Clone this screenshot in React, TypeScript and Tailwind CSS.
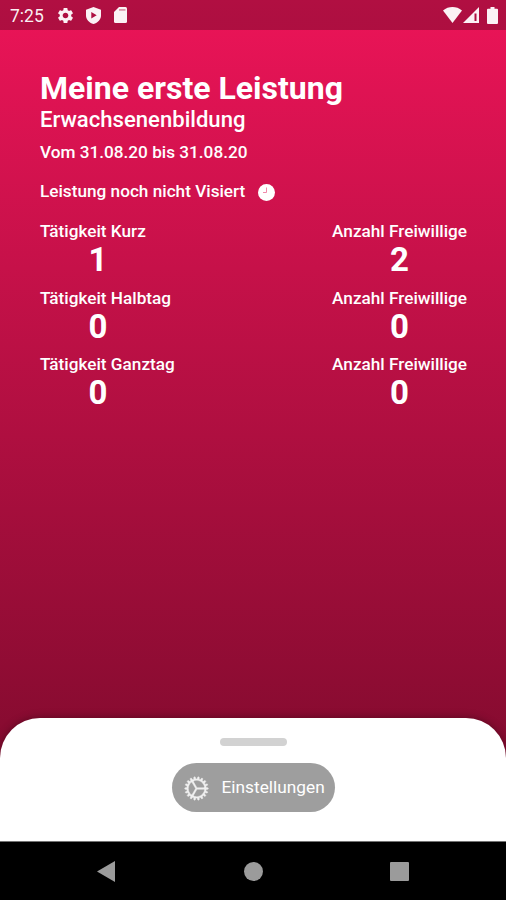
import { IoIosCog } from "react-icons/io";
import { MdSettings } from "react-icons/md";

interface Activity {
    label: string;
    count: number;
    volunteers: number;
}

const activities: Activity[] = [
    { label: "Tätigkeit Kurz", count: 1, volunteers: 2 },
    { label: "Tätigkeit Halbtag", count: 0, volunteers: 0 },
    { label: "Tätigkeit Ganztag", count: 0, volunteers: 0 },
];

function StatusBar() {
    return (
        <div className="h-[30px] shrink-0 flex items-center justify-between bg-black/25 pl-[10px] pr-[8px] text-white/95">
            <div className="flex items-center">
                <span className="w-[46px] text-[17.5px] leading-[30px] pt-[2px]">7:25</span>
                <MdSettings className="w-[19px] h-[19px]" />
                <svg className="w-[15px] h-[17px] ml-[11px]" viewBox="0 0 15 17">
                    <path
                        d="M7.5 0 15 2.7v5.8c0 4-3 7.2-7.5 8.5C3 15.7 0 12.5 0 8.5V2.7Z M5.3 5v6.6l5.4-3.3Z"
                        fill="currentColor"
                        fillRule="evenodd"
                    />
                </svg>
                <svg className="w-[13px] h-[16px] ml-[13px]" viewBox="0 0 13 16">
                    <path
                        d="M5 0h6.5A1.5 1.5 0 0 1 13 1.5v13a1.5 1.5 0 0 1-1.5 1.500h-10A1.5 1.5 0 0 1 0 14.5V5Z"
                        fill="currentColor"
                    />
                    <path d="M5 2h6.5v1.8H5Z" fill="#b01041" opacity="0.4" />
                </svg>
            </div>
            <div className="flex items-center">
                <svg className="w-[19px] h-[16px]" viewBox="0 0 19 16">
                    <path d="M0 3.5C5.5-1.1 13.5-1.1 19 3.5L9.5 16Z" fill="currentColor" />
                </svg>
                <svg className="w-[16px] h-[16px] ml-[1px]" viewBox="0 0 16 16">
                    <path d="M0 16 16 0v16Z M11.5 6.5v7.500h2v-7.500Z" fill="currentColor" fillRule="evenodd" />
                </svg>
                <svg className="w-[11px] h-[17px] ml-[8px]" viewBox="0 0 11 17">
                    <path
                        d="M3.5 0h4v1.7H10a1 1 0 0 1 1 1V16a1 1 0 0 1-1 1H1a1 1 0 0 1-1-1V2.7a1 1 0 0 1 1-1h2.5Z"
                        fill="currentColor"
                    />
                </svg>
            </div>
        </div>
    );
}

function ActivityRow({ label, count, volunteers }: Activity) {
    return (
        <div className="h-[66.5px] flex justify-between">
            <div>
                <p className="text-[17.2px] leading-5 font-medium">{label}</p>
                <p className="w-[116px] text-center text-[33px] leading-[37px] font-bold">{count}</p>
            </div>
            <div className="text-center">
                <p className="text-[17.2px] leading-5 font-medium">Anzahl Freiwillige</p>
                <p className="text-[33px] leading-[37px] font-bold">{volunteers}</p>
            </div>
        </div>
    );
}

function NavigationBar() {
    return (
        <div className="h-[59px] shrink-0 flex items-center justify-between bg-black border-t border-neutral-500 pl-[97px] pr-[97px] text-[#9b9b9b]">
            <svg className="w-[18px] h-[21px]" viewBox="0 0 18 21">
                <path d="M18 0v21L0 10.5Z" fill="currentColor" />
            </svg>
            <div className="w-[19px] h-[19px] ml-px rounded-full bg-[#9b9b9b]" />
            <div className="w-[19px] h-[19px] rounded-[1px] bg-[#9b9b9b]" />
        </div>
    );
}

export default function App() {
    return (
        <div className="w-[506px] h-[900px] flex flex-col overflow-hidden bg-linear-to-b from-[#ec1458] to-[#720928] font-[Roboto,sans-serif] text-white">
            <StatusBar />

            <main className="flex-1 pl-[40px] pr-[39px] pt-[39px]">
                <h1 className="text-[32px] leading-[38px] font-bold">Meine erste Leistung</h1>
                <h2 className="text-[22.1px] leading-[25px] font-medium">Erwachsenenbildung</h2>
                <p className="mt-[10px] text-[17.2px] leading-5 font-medium">Vom 31.08.20 bis 31.08.20</p>
                <div className="mt-[19px] flex items-center text-[17.2px] leading-[21px] font-medium">
                    <span>Leistung noch nicht Visiert</span>
                    <svg className="w-[17px] h-[17px] ml-[13px] mt-px" viewBox="0 0 17 17">
                        <circle cx="8.5" cy="8.5" r="8.5" fill="white" />
                        <path d="M8.5 3.5v5H5" fill="none" stroke="#f08aab" />
                    </svg>
                </div>
                <div className="mt-[19px]">
                    {activities.map((activity) => (
                        <ActivityRow key={activity.label} {...activity} />
                    ))}
                </div>
            </main>

            <div className="h-[123px] shrink-0 flex flex-col items-center rounded-t-[40px] bg-white pt-[20px] shadow-[0_0_8px_rgba(0,0,0,0.35)]">
                <div className="w-[67px] h-[8px] rounded-full bg-[#d2d2d2]" />
                <button className="w-[163px] h-[49px] mt-[17px] flex items-center rounded-full bg-[#9e9e9e] pl-[10px] text-[17.3px]">
                    <IoIosCog className="w-[29px] h-[29px] mt-[2px] stroke-[8] opacity-85" />
                    <span className="ml-[11px]">Einstellungen</span>
                </button>
            </div>
            <NavigationBar />
        </div>
    );
}
